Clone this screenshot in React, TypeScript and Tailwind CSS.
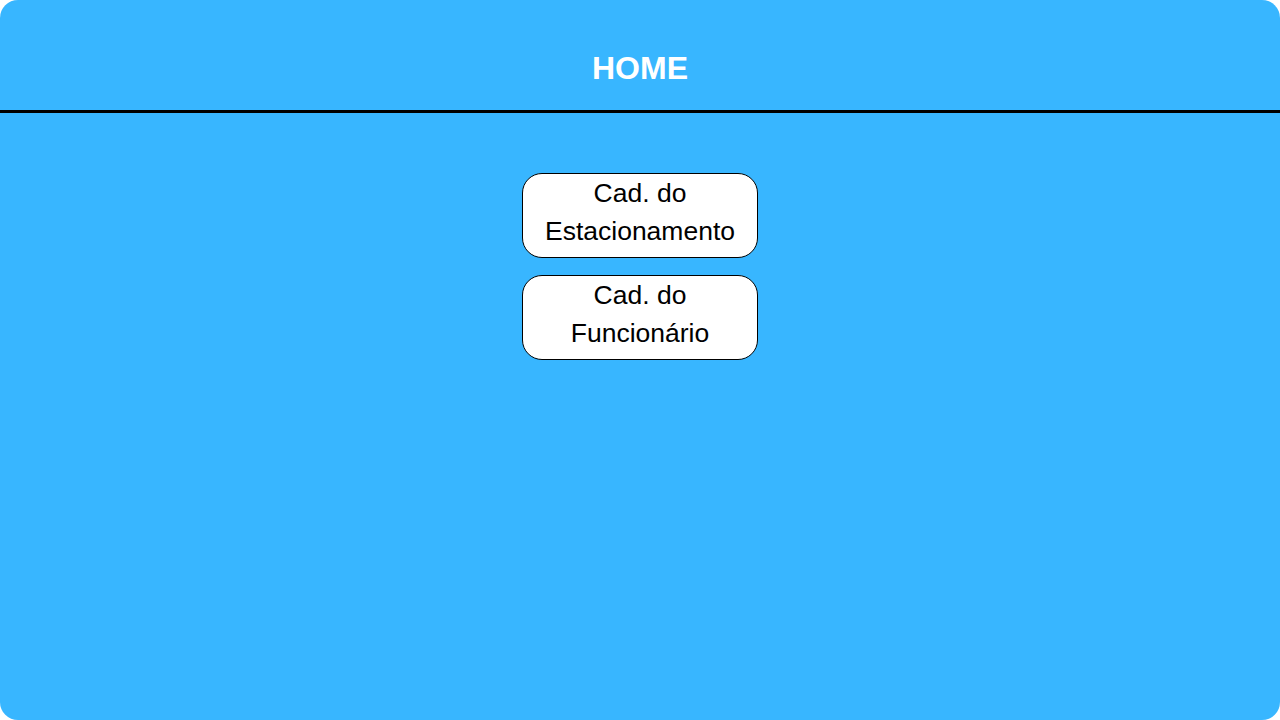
export default function App() {
  return (
    <div className="h-[720px] w-[1280px] bg-white" style={{ fontFamily: '"Liberation Sans", Arial, sans-serif' }}>
      <div className="flex h-full w-full flex-col rounded-[18px] bg-[#38b6ff]">
        {/* Header */}
        <div className="flex h-[110px] items-center justify-center pt-[26px]">
          <h1 className="text-[32px] font-bold text-white">HOME</h1>
        </div>
        <div className="h-[3px] w-full bg-black" />

        {/* Menu */}
        <div className="flex flex-col items-center gap-[17px] pt-[60px]">
          {[
            ["Cad. do", "Estacionamento"],
            ["Cad. do", "Funcionário"],
          ].map(([a, b]) => (
            <button
              key={b}
              type="button"
              className="flex h-[85px] w-[236px] flex-col items-center justify-start rounded-[20px] border border-black bg-white pt-px text-[26.5px] leading-[37.5px] text-black"
            >
              <span>{a}</span>
              <span>{b}</span>
            </button>
          ))}
        </div>
      </div>
    </div>
  );
}
